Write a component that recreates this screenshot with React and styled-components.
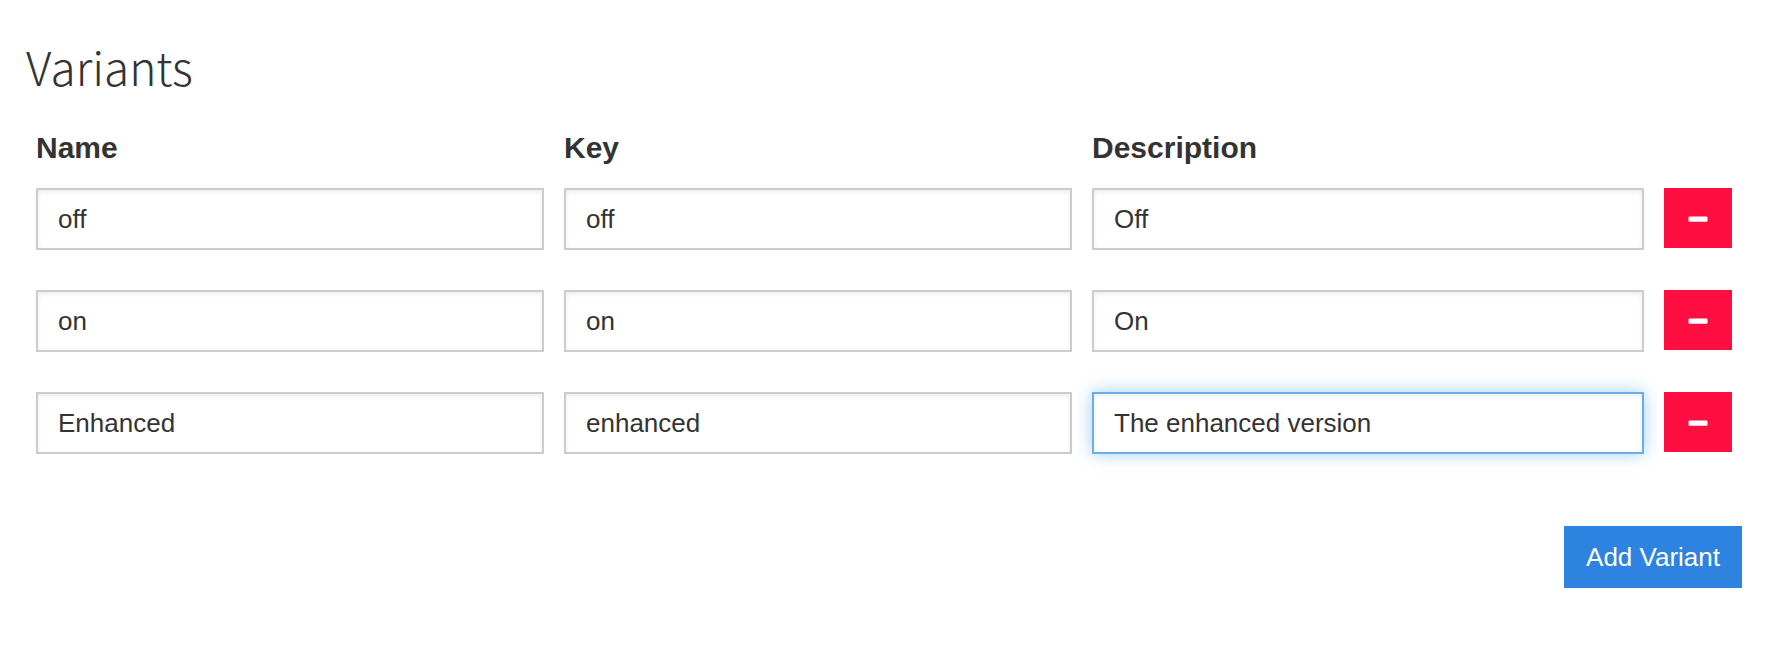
import React, { useState } from "react";
import styled, { createGlobalStyle, css } from "styled-components";

const GlobalStyle = createGlobalStyle`
  * { box-sizing: border-box; }
  body {
    margin: 0;
    background: #fff;
    color: #333;
    font-family: "Liberation Sans", Arial, sans-serif;
  }
`;

const Page = styled.main`
  padding: 36px 24px 68px 26px;
`;

const Title = styled.h1`
  margin: 0;
  font-family: "Noto Sans CJK JP", "Noto Sans", sans-serif;
  font-size: 46px;
  line-height: 60px;
  font-weight: 200;
`;

const VariantGrid = styled.div`
  display: flex;
  flex-direction: column;
  gap: 40px;
  padding: 0 10px;
`;

const rowLayout = css`
  display: grid;
  grid-template-columns: 127fr 127fr 138fr 68px;
  column-gap: 20px;
`;

const HeaderRow = styled.div`
  ${rowLayout}
  padding: 0 10px;
  margin: 32px 0 20px;
`;

const VariantRow = styled.div`
  ${rowLayout}
`;

const ColumnLabel = styled.label`
  font-size: 30px;
  line-height: 40px;
  font-weight: 700;
`;

const focusRing = css`
  border-color: #66afe9;
  box-shadow: inset 0 2px 4px rgba(0, 0, 0, 0.08), 0 0 16px rgba(102, 175, 233, 0.6);
`;

const TextField = styled.input`
  width: 100%;
  min-width: 0;
  height: 62px;
  padding: 0 20px;
  border: 2px solid #ccc;
  border-radius: 0;
  background: #fff;
  color: #333;
  font: 26px/36px "Liberation Sans", Arial, sans-serif;
  box-shadow: inset 0 2px 4px rgba(0, 0, 0, 0.08);
  outline: none;
  &:focus { ${focusRing} }
  ${({ $active }) => $active && focusRing}
`;

const Button = styled.button`
  display: flex;
  align-items: center;
  justify-content: center;
  border: 0;
  border-radius: 0;
  color: #fff;
  font: 26px/36px "Liberation Sans", Arial, sans-serif;
  cursor: pointer;
`;

const RemoveButton = styled(Button)`
  height: 60px;
  padding: 0;
  background: #ff0f41;
`;

const AddButton = styled(Button)`
  height: 62px;
  padding: 0 22px;
  background: #2e83e0;
`;

const Actions = styled.div`
  display: flex;
  justify-content: flex-end;
  margin-top: 72px;
`;

const MinusIcon = () => (
  <svg width="20" height="20" viewBox="0 0 20 20" aria-hidden="true">
    <rect x="0.5" y="8.5" width="19" height="5.2" rx="1.2" fill="currentColor" />
  </svg>
);

const columns = [
  { field: "name", label: "Name" },
  { field: "key", label: "Key" },
  { field: "description", label: "Description" },
];

const initialVariants = [
  { id: 0, name: "off", key: "off", description: "Off" },
  { id: 1, name: "on", key: "on", description: "On" },
  { id: 2, name: "Enhanced", key: "enhanced", description: "The enhanced version" },
];

export default function App() {
  const [variants, setVariants] = useState(initialVariants);
  const [active, setActive] = useState("description-2");

  const update = (id, field, value) =>
    setVariants((list) => list.map((v) => (v.id === id ? { ...v, [field]: value } : v)));
  const remove = (id) => setVariants((list) => list.filter((v) => v.id !== id));
  const add = () =>
    setVariants((list) => [
      ...list,
      { id: Math.max(-1, ...list.map((v) => v.id)) + 1, name: "", key: "", description: "" },
    ]);

  return (
    <>
      <GlobalStyle />
      <Page>
        <Title>Variants</Title>
        <HeaderRow>
          {columns.map(({ field, label }) => (
            <ColumnLabel key={field} id={`${field}-label`} htmlFor={`${field}-${variants[0]?.id}`}>
              {label}
            </ColumnLabel>
          ))}
        </HeaderRow>
        <VariantGrid>
          {variants.map((variant) => (
            <VariantRow key={variant.id}>
              {columns.map(({ field }) => {
                const id = `${field}-${variant.id}`;
                return (
                  <TextField
                    key={field}
                    id={id}
                    type="text"
                    aria-labelledby={`${field}-label`}
                    value={variant[field]}
                    $active={active === id}
                    onFocus={() => setActive(id)}
                    onBlur={() => setActive(null)}
                    onChange={(e) => update(variant.id, field, e.target.value)}
                  />
                );
              })}
              <RemoveButton type="button" aria-label="Remove variant" onClick={() => remove(variant.id)}>
                <MinusIcon />
              </RemoveButton>
            </VariantRow>
          ))}
        </VariantGrid>
        <Actions>
          <AddButton type="button" onClick={add}>Add Variant</AddButton>
        </Actions>
      </Page>
    </>
  );
}
